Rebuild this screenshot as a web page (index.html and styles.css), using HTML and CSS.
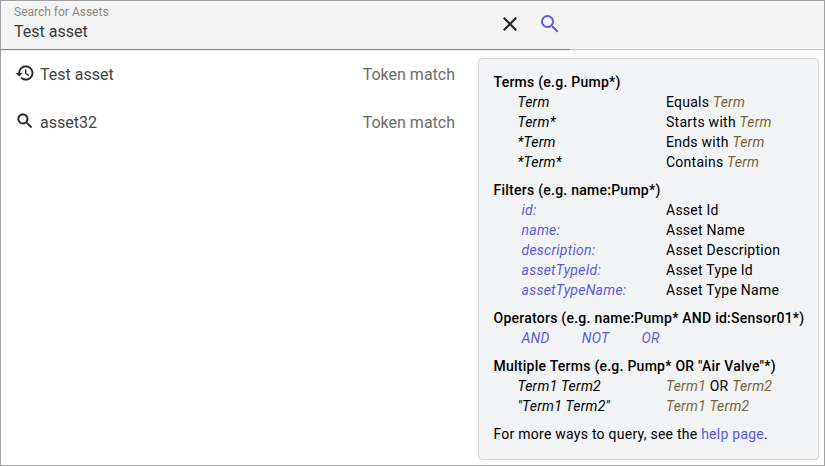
FILE: index.html
```html
<!DOCTYPE html>
<html lang="en">
<head>
<meta charset="utf-8">
<title>Search for Assets</title>
<link rel="stylesheet" href="styles.css">
</head>
<body>
<div class="app">
  <header class="bar">
    <div class="field">
      <div class="text"><label>Search for Assets</label><div class="value">Test asset</div></div>
      <svg class="clear" viewBox="0 0 24 24"><path d="M19 6.41L17.59 5 12 10.59 6.41 5 5 6.41 10.59 12 5 17.59 6.41 19 12 13.41 17.59 19 19 17.59 13.41 12z"/></svg>
      <svg class="go" viewBox="0 0 24 24"><path d="M15.5 14h-.79l-.28-.27A6.471 6.471 0 0 0 16 9.5 6.5 6.5 0 1 0 9.5 16c1.61 0 3.09-.59 4.23-1.57l.27.28v.79l5 4.99L20.49 19l-4.99-5zm-6 0C7.01 14 5 11.99 5 9.5S7.01 5 9.5 5 14 7.01 14 9.5 11.99 14 9.5 14z"/></svg>
    </div>
  </header>
  <main class="content">
    <ul class="results">
      <li><svg viewBox="0 0 24 24"><path d="M13 3a9 9 0 0 0-9 9H1l3.89 3.89.07.14L9 12H6c0-3.87 3.13-7 7-7s7 3.13 7 7-3.13 7-7 7c-1.93 0-3.68-.79-4.94-2.06l-1.42 1.42A8.954 8.954 0 0 0 13 21a9 9 0 0 0 0-18zm-1 5v5l4.28 2.54.72-1.21-3.5-2.08V8H12z"/></svg><span>Test asset</span><span class="match">Token match</span></li>
      <li><svg viewBox="0 0 24 24"><path d="M15.5 14h-.79l-.28-.27A6.471 6.471 0 0 0 16 9.5 6.5 6.5 0 1 0 9.5 16c1.61 0 3.09-.59 4.23-1.57l.27.28v.79l5 4.99L20.49 19l-4.99-5zm-6 0C7.01 14 5 11.99 5 9.5S7.01 5 9.5 5 14 7.01 14 9.5 11.99 14 9.5 14z"/></svg><span>asset32</span><span class="match">Token match</span></li>
    </ul>
    <aside class="help">
      <section><h2>Terms (e.g. Pump*)</h2>
        <dl class="terms"><dt>Term</dt><dd>Equals <i>Term</i></dd><dt>Term*</dt><dd>Starts with <i>Term</i></dd><dt>*Term</dt><dd>Ends with <i>Term</i></dd><dt>*Term*</dt><dd>Contains <i>Term</i></dd></dl></section>
      <section><h2>Filters (e.g. name:Pump*)</h2>
        <dl class="filters"><dt>id:</dt><dd>Asset Id</dd><dt>name:</dt><dd>Asset Name</dd><dt>description:</dt><dd>Asset Description</dd><dt>assetTypeId:</dt><dd>Asset Type Id</dd><dt>assetTypeName:</dt><dd>Asset Type Name</dd></dl></section>
      <section><h2>Operators (e.g. name:Pump* AND id:Sensor01*)</h2>
        <div class="ops"><span>AND</span><span>NOT</span><span>OR</span></div></section>
      <section><h2>Multiple Terms (e.g. Pump* OR "Air Valve"*)</h2>
        <dl class="terms"><dt>Term1 Term2</dt><dd><i>Term1</i> OR <i>Term2</i></dd><dt>"Term1 Term2"</dt><dd><i>Term1 Term2</i></dd></dl></section>
      <p>For more ways to query, see the <a>help page</a>.</p>
    </aside>
  </main>
</div>
</body>
</html>
```
FILE: styles.css
```css
* { box-sizing: border-box; }
body { margin: 0; background: #fff; color: #000; font-family: Roboto, "Liberation Sans", sans-serif; }
.app { width: 825px; height: 466px; border: 1px solid #a0a0a0; overflow: hidden; }
.bar { height: 49px; background: #f4f4f4; border-bottom: 1px solid #c4c4c4; box-shadow: 0 1px 0 #f3f3f3; }
.field { display: flex; align-items: flex-start; width: 569px; height: 49px; padding-left: 13px; border-bottom: 1px solid #858585; }
.text { width: 484px; }
label { display: block; margin-top: 4px; font-size: 12px; line-height: 14px; color: #888; }
.value { margin-top: 2px; font-size: 16px; line-height: 22px; color: #3a3a3a; }
svg { display: block; flex: none; }
.clear { width: 24px; height: 24px; margin-top: 11px; fill: #222; }
.go { width: 24px; height: 24px; margin: 11px 0 0 16px; fill: #5b5be0; }
.content { display: flex; height: 415px; }
.results { list-style: none; width: 477px; margin: 0; padding: 0 23px 0 15px; }
.results li { display: flex; align-items: center; height: 48px; font-size: 16px; color: #444; }
.results svg { width: 20px; height: 20px; margin: -2px 5px 0 -1px; fill: #222; stroke: #222; stroke-width: .3px; }
.match { margin-left: auto; color: #6c6c6c; }
.help { width: 341px; height: 402px; margin-top: 8px; padding: 13px 0 0 14.5px; background: #f2f4f6; border: 1px solid #d1d5db; border-radius: 4px; font-size: 14px; line-height: 20px; letter-spacing: .25px; white-space: nowrap; }
section { margin-bottom: 8px; }
h2 { margin: 0; font-size: 14px; font-weight: 500; }
dl { display: grid; grid-template-columns: 148.5px 1fr; margin: 0; padding-left: 24px; }
dt { font-style: italic; }
dd { margin: 0; }
dd i { color: #7d6337; }
.filters { padding-left: 28px; grid-template-columns: 144.5px 1fr; }
.filters dt, .ops, a { color: #5b5be0; }
.ops { display: flex; gap: 32px; padding-left: 28px; font-style: italic; }
p { margin: 0; }
```
